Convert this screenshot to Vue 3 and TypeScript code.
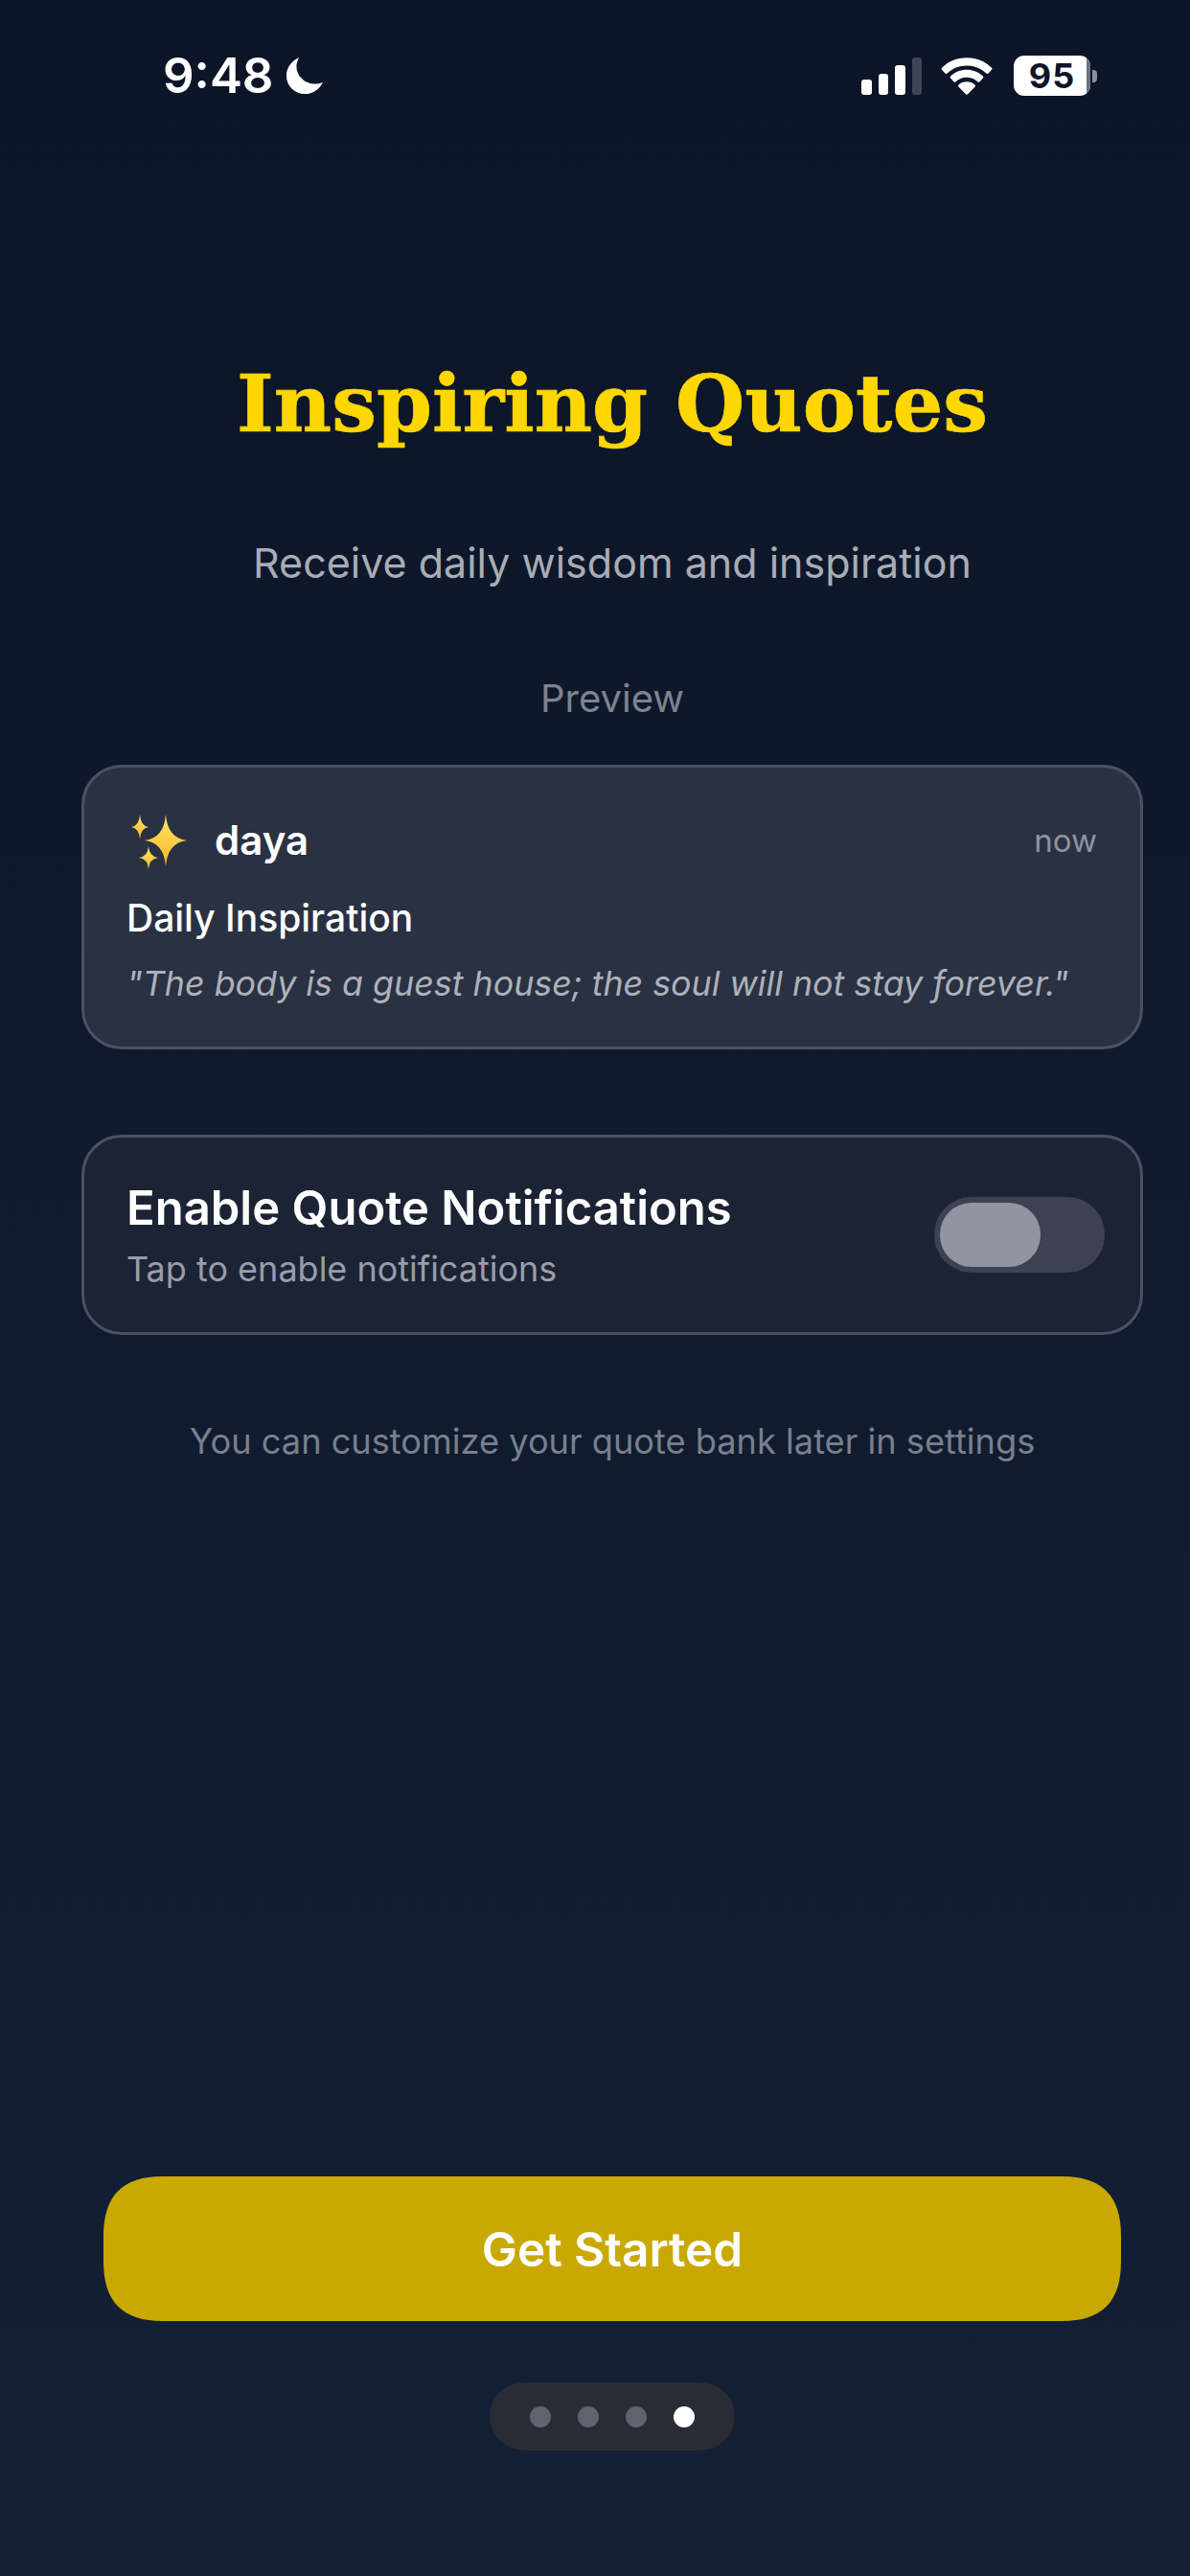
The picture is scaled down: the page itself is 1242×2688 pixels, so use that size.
<script setup lang="ts">
const bars: number[] = [16, 22, 31, 39]
const dots: boolean[] = [false, false, false, true]
const star = (cx: number, cy: number, rx: number, ry: number): string => {
  const k = 0.09
  const ax = rx * k
  const ay = ry * k
  return `M${cx} ${cy - ry}Q${cx + ax} ${cy - ay} ${cx + rx} ${cy}Q${cx + ax} ${cy + ay} ${cx} ${cy + ry}Q${cx - ax} ${cy + ay} ${cx - rx} ${cy}Q${cx - ax} ${cy - ay} ${cx} ${cy - ry}Z`
}
const sparkles: string[] = [star(40, 30, 22, 27), star(13, 16, 9, 13), star(22, 48, 10, 12)]
</script>

<template>
  <div class="page">
    <header class="status">
      <div class="status-left">
        <span class="time">9:48</span>
        <svg class="moon" width="40" height="40" viewBox="0 0 42 42">
          <path d="M15 1C8 4 1 11 1 21c0 11 9 20 20 20 9 0 16-5 20-13-3 1.500-6 2-9 2-11 0-20-9-20-19 0-3 1-7 3-10z" fill="#fff" />
        </svg>
      </div>
      <div class="status-right">
        <div class="signal">
          <i v-for="(h, i) in bars" :key="i" class="bar" :class="{ off: i === 3 }" :style="{ height: h + 'px' }"></i>
        </div>
        <svg class="wifi" width="54" height="39" viewBox="0 0 56 40">
          <path d="M28 0C17 0 8 4 1 11c-.6.6-.6 1.500 0 2l3.500 4c.5.600 1.400.600 2 .1C12.500 11.500 20 8.500 28 8.500s15.500 3 21.500 8.600c.6.5 1.500.5 2-.1l3.500-4c.6-.5.6-1.400 0-2C48 4 39 0 28 0z" fill="#fff" />
          <path d="M28 13c-7 0-13 2.700-17.500 7-.6.5-.6 1.400-.1 2l3.500 4c.5.600 1.400.600 2 .1C19 23 23.300 21.300 28 21.300s9 1.700 12.100 4.800c.6.500 1.500.500 2-.1l3.500-4c.5-.6.5-1.500-.1-2C41 15.700 35 13 28 13z" fill="#fff" />
          <path d="M28 26c-3.500 0-6.500 1.300-8.800 3.300-.6.500-.6 1.400-.1 2l7.800 8.200c.6.600 1.600.6 2.200 0l7.800-8.200c.5-.6.500-1.500-.1-2C34.500 27.300 31.500 26 28 26z" fill="#fff" />
        </svg>
        <div class="battery">
          <div class="battery-body">
            <span class="battery-text">95</span>
            <i class="battery-rest"></i>
          </div>
          <i class="battery-cap"></i>
        </div>
      </div>
    </header>

    <main class="content">
      <h1 class="title">Inspiring Quotes</h1>
      <p class="subtitle">Receive daily wisdom and inspiration</p>
      <p class="preview-label">Preview</p>

      <section class="card notification">
        <div class="note-head">
          <svg class="sparkles" width="62" height="60" viewBox="0 0 62 60">
            <defs>
              <linearGradient id="sparkleFill" x1="0" y1="0" x2="0" y2="1">
                <stop offset="0" stop-color="#ffe566" />
                <stop offset="1" stop-color="#f7b52b" />
              </linearGradient>
            </defs>
            <path v-for="(d, i) in sparkles" :key="i" :d="d" fill="url(#sparkleFill)" />
          </svg>
          <span class="app-name">daya</span>
          <span class="now">now</span>
        </div>
        <div class="note-title">Daily Inspiration</div>
        <div class="note-quote">"The body is a guest house; the soul will not stay forever."</div>
      </section>

      <section class="card enable">
        <div class="enable-text">
          <div class="enable-title">Enable Quote Notifications</div>
          <div class="enable-sub">Tap to enable notifications</div>
        </div>
        <div class="toggle"><i class="thumb"></i></div>
      </section>

      <p class="hint">You can customize your quote bank later in settings</p>
    </main>

    <footer class="footer">
      <button class="cta">Get Started</button>
      <div class="pager">
        <i v-for="(on, i) in dots" :key="i" class="dot" :class="{ on }"></i>
      </div>
    </footer>
  </div>
</template>

<style scoped>
.page {
  width: 1242px;
  height: 2688px;
  box-sizing: border-box;
  display: flex;
  flex-direction: column;
  background: linear-gradient(180deg, #0c1527 0%, #132035 100%);
  font-family: Inter, "Liberation Sans", sans-serif;
  color: #fff;
  overflow: hidden;
}
.status {
  padding: 54px 97px 0 170px;
  height: 50px;
  display: flex;
  justify-content: space-between;
  align-items: center;
}
.status-left { display: flex; align-items: center; gap: 12px; }
.time { font-size: 51px; font-weight: 600; line-height: 50px; }
.status-right { display: flex; align-items: center; }
.signal { display: flex; align-items: flex-end; gap: 7px; height: 39px; margin-right: 20px; }
.bar { display: block; width: 10.500px; background: #fff; border-radius: 3px; }
.bar.off { background: #3f4556; }
.wifi { margin-right: 22px; }
.battery { display: flex; align-items: center; gap: 2px; }
.battery-body {
  width: 80px;
  height: 42px;
  border-radius: 11px;
  background: #fff;
  overflow: hidden;
  position: relative;
  display: flex;
  align-items: center;
  justify-content: center;
  box-sizing: border-box;
}
.battery-rest { position: absolute; right: 0; top: 0; bottom: 0; width: 4px; background: #6d7280; }
.battery-text { color: #0d1528; font-size: 36px; font-weight: 700; line-height: 42px; letter-spacing: 1px; }
.battery-cap { display: block; width: 5px; height: 13px; background: #8b8f99; border-radius: 0 4px 4px 0; }

.content {
  padding: 0 49px 0 85px;
  display: flex;
  flex-direction: column;
  align-items: center;
}
.title {
  margin: 264px 0 0;
  font-family: "DejaVu Serif", serif;
  font-weight: 700;
  font-size: 83px;
  line-height: 106px;
  color: #ffd700;
  -webkit-text-stroke: 0.7px #ffd700;
}
.subtitle { margin: 86px 0 0; font-size: 43px; line-height: 54px; color: #a9acb5; }
.preview-label { margin: 92px 0 0; font-size: 40px; line-height: 46px; color: #7f838e; }
.card {
  box-sizing: border-box;
  width: 1108px;
  border: 3px solid #4a5162;
  border-radius: 42px;
}
.notification {
  margin-top: 46px;
  height: 297px;
  padding: 46px 45px 0 44px;
  background: #2a3142;
}
.note-head { display: flex; align-items: center; height: 60px; }
.sparkles { margin-right: 29px; margin-left: 1px; }
.app-name { font-size: 42px; font-weight: 600; line-height: 60px; }
.now { margin-left: auto; font-size: 33px; color: #8f939e; }
.note-title { margin-top: 27px; font-size: 39px; font-weight: 500; line-height: 48px; }
.note-quote { margin-top: 21px; font-size: 35.800px; line-height: 46px; font-style: italic; color: #aeb1ba; }
.enable {
  margin-top: 89px;
  height: 209px;
  padding: 0 37px 0 44px;
  background: #1c2335;
  display: flex;
  align-items: center;
  justify-content: space-between;
}
.enable-title { font-size: 49px; font-weight: 600; line-height: 58px; }
.enable-sub { margin-top: 12px; font-size: 36px; line-height: 44px; color: #9a9da8; }
.toggle {
  width: 178px;
  height: 79px;
  padding: 6px;
  box-sizing: border-box;
  border-radius: 39px;
  background: #3d4152;
  flex: none;
}
.thumb { display: block; width: 105px; height: 67px; border-radius: 33px; background: #92959f; }
.hint { margin: 88px 0 0; font-size: 36.200px; line-height: 46px; color: #7a7f8b; }

.footer {
  margin-top: auto;
  padding: 0 72px 131px 108px;
  display: flex;
  flex-direction: column;
  align-items: center;
}
.cta {
  width: 1062px;
  height: 151px;
  border: 0;
  background: #c9a900;
  clip-path: path("M62 0H1000C1042 0 1062 20 1062 62V89C1062 131 1042 151 1000 151H62C20 151 0 131 0 89V62C0 20 20 0 62 0Z");
  color: #fff;
  font-family: inherit;
  font-size: 49.500px;
  font-weight: 600;
}
.pager {
  margin-top: 64px;
  width: 256px;
  height: 71px;
  border-radius: 36px;
  background: #292c35;
  display: flex;
  align-items: center;
  justify-content: center;
  gap: 28px;
}
.dot { display: block; width: 22px; height: 22px; border-radius: 50%; background: #60636e; }
.dot.on { background: #fff; }
</style>
